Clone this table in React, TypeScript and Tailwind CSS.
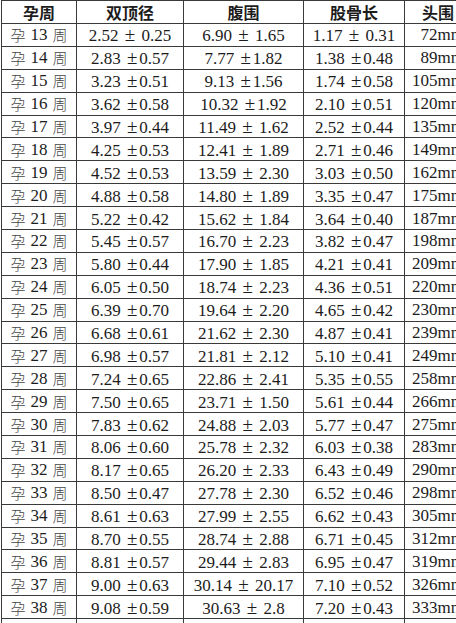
const rows: [number, string, string, string, string][] = [
  [13, "2.52 ± 0.25", "6.90 ± 1.65", "1.17 ± 0.31", "72mm"],
  [14, "2.83 ±0.57", "7.77 ±1.82", "1.38 ±0.48", "89mm"],
  [15, "3.23 ±0.51", "9.13 ±1.56", "1.74 ±0.58", "105mm"],
  [16, "3.62 ±0.58", "10.32 ±1.92", "2.10 ±0.51", "120mm"],
  [17, "3.97 ±0.44", "11.49 ± 1.62", "2.52 ±0.44", "135mm"],
  [18, "4.25 ±0.53", "12.41 ± 1.89", "2.71 ±0.46", "149mm"],
  [19, "4.52 ±0.53", "13.59 ± 2.30", "3.03 ±0.50", "162mm"],
  [20, "4.88 ±0.58", "14.80 ± 1.89", "3.35 ±0.47", "175mm"],
  [21, "5.22 ±0.42", "15.62 ± 1.84", "3.64 ±0.40", "187mm"],
  [22, "5.45 ±0.57", "16.70 ± 2.23", "3.82 ±0.47", "198mm"],
  [23, "5.80 ±0.44", "17.90 ± 1.85", "4.21 ±0.41", "209mm"],
  [24, "6.05 ±0.50", "18.74 ± 2.23", "4.36 ±0.51", "220mm"],
  [25, "6.39 ±0.70", "19.64 ± 2.20", "4.65 ±0.42", "230mm"],
  [26, "6.68 ±0.61", "21.62 ± 2.30", "4.87 ±0.41", "239mm"],
  [27, "6.98 ±0.57", "21.81 ± 2.12", "5.10 ±0.41", "249mm"],
  [28, "7.24 ±0.65", "22.86 ± 2.41", "5.35 ±0.55", "258mm"],
  [29, "7.50 ±0.65", "23.71 ± 1.50", "5.61 ±0.44", "266mm"],
  [30, "7.83 ±0.62", "24.88 ± 2.03", "5.77 ±0.47", "275mm"],
  [31, "8.06 ±0.60", "25.78 ± 2.32", "6.03 ±0.38", "283mm"],
  [32, "8.17 ±0.65", "26.20 ± 2.33", "6.43 ±0.49", "290mm"],
  [33, "8.50 ±0.47", "27.78 ± 2.30", "6.52 ±0.46", "298mm"],
  [34, "8.61 ±0.63", "27.99 ± 2.55", "6.62 ±0.43", "305mm"],
  [35, "8.70 ±0.55", "28.74 ± 2.88", "6.71 ±0.45", "312mm"],
  [36, "8.81 ±0.57", "29.44 ± 2.83", "6.95 ±0.47", "319mm"],
  [37, "9.00 ±0.63", "30.14 ± 20.17", "7.10 ±0.52", "326mm"],
  [38, "9.08 ±0.59", "30.63 ± 2.8", "7.20 ±0.43", "333mm"],
  [39, "9.21 ±0.59", "31.34 ± 3.12", "7.34 ±0.53", "340mm"],
];

const heads = ["孕周", "双顶径", "腹围", "股骨长", "头围"];

// wider ± like the scanned table
function Val({ text }: { text: string }) {
  const [a, b] = text.split("±");
  return (
    <span className="whitespace-pre">
      {a}
      <span className="text-[19px] mx-[2px]">±</span>
      {b}
    </span>
  );
}

const cell =
  "flex items-center justify-center border-r border-b border-[#3a3a3a] whitespace-nowrap leading-none";

export default function App() {
  return (
    <div className="w-[456px] h-[623px] overflow-hidden bg-white">
      <div className="w-[470px] ml-[1px] border-l border-t border-[#3a3a3a] grid grid-cols-[75px_107px_120px_101px_67px] text-[#1c1c1c] font-['Liberation_Serif','Noto_Sans_CJK_SC',serif] text-[17px] leading-none">
        {heads.map((h, i) => (
          <div
            key={h}
            className={`${cell} h-[23px] font-['Noto_Sans_CJK_SC',sans-serif] font-bold text-[16px] ${
              i === 4 ? "justify-start pl-[17px]" : ""
            }`}
          >
            {h}
          </div>
        ))}
        {rows.map(([w, a, b, c, d]) => (
          <div key={w} className="contents">
            <div className={`${cell} h-[22.9px]`}>
              <span className="font-['Noto_Sans_CJK_SC'] font-light text-[15px] text-[#444]">孕</span>
              <span className="px-[5px]">{w}</span>
              <span className="font-['Noto_Sans_CJK_SC'] font-light text-[15px] text-[#444]">周</span>
            </div>
            <div className={`${cell} h-[22.9px]`}>
              <Val text={a} />
            </div>
            <div className={`${cell} h-[22.9px]`}>
              <Val text={b} />
            </div>
            <div className={`${cell} h-[22.9px]`}>
              <Val text={c} />
            </div>
            <div className={`${cell} h-[22.9px] justify-end pr-[7px]`}>{d}</div>
          </div>
        ))}
      </div>
    </div>
  );
}
